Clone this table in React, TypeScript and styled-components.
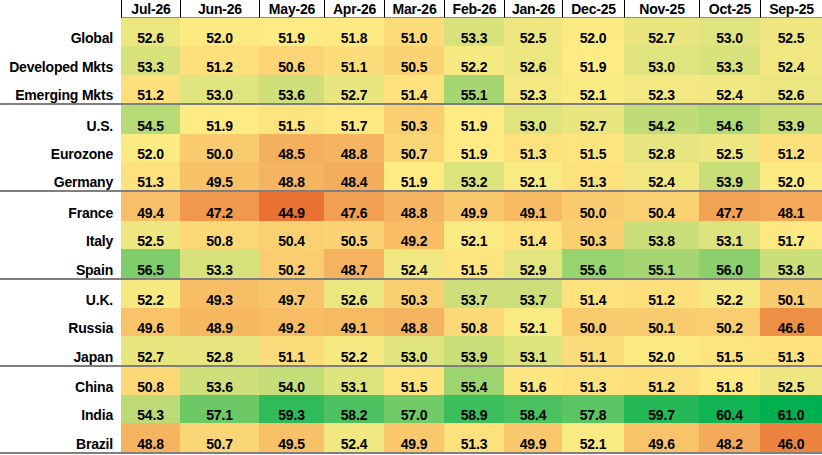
import React from 'react';
import styled, { createGlobalStyle } from 'styled-components';

const MONTHS = ['Jul-26', 'Jun-26', 'May-26', 'Apr-26', 'Mar-26', 'Feb-26', 'Jan-26', 'Dec-25', 'Nov-25', 'Oct-25', 'Sep-25'];
const WIDTHS = [59, 79, 65, 60, 60, 60, 58, 62, 75, 61, 62];
const TEMPLATE = `121px ${WIDTHS.map((w) => `${w}px`).join(' ')}`;

type RowData = { name: string; values: number[] };

const GROUPS: RowData[][] = [
  [
    { name: 'Global', values: [52.6, 52.0, 51.9, 51.8, 51.0, 53.3, 52.5, 52.0, 52.7, 53.0, 52.5] },
    { name: 'Developed Mkts', values: [53.3, 51.2, 50.6, 51.1, 50.5, 52.2, 52.6, 51.9, 53.0, 53.3, 52.4] },
    { name: 'Emerging Mkts', values: [51.2, 53.0, 53.6, 52.7, 51.4, 55.1, 52.3, 52.1, 52.3, 52.4, 52.6] },
  ],
  [
    { name: 'U.S.', values: [54.5, 51.9, 51.5, 51.7, 50.3, 51.9, 53.0, 52.7, 54.2, 54.6, 53.9] },
    { name: 'Eurozone', values: [52.0, 50.0, 48.5, 48.8, 50.7, 51.9, 51.3, 51.5, 52.8, 52.5, 51.2] },
    { name: 'Germany', values: [51.3, 49.5, 48.8, 48.4, 51.9, 53.2, 52.1, 51.3, 52.4, 53.9, 52.0] },
  ],
  [
    { name: 'France', values: [49.4, 47.2, 44.9, 47.6, 48.8, 49.9, 49.1, 50.0, 50.4, 47.7, 48.1] },
    { name: 'Italy', values: [52.5, 50.8, 50.4, 50.5, 49.2, 52.1, 51.4, 50.3, 53.8, 53.1, 51.7] },
    { name: 'Spain', values: [56.5, 53.3, 50.2, 48.7, 52.4, 51.5, 52.9, 55.6, 55.1, 56.0, 53.8] },
  ],
  [
    { name: 'U.K.', values: [52.2, 49.3, 49.7, 52.6, 50.3, 53.7, 53.7, 51.4, 51.2, 52.2, 50.1] },
    { name: 'Russia', values: [49.6, 48.9, 49.2, 49.1, 48.8, 50.8, 52.1, 50.0, 50.1, 50.2, 46.6] },
    { name: 'Japan', values: [52.7, 52.8, 51.1, 52.2, 53.0, 53.9, 53.1, 51.1, 52.0, 51.5, 51.3] },
  ],
  [
    { name: 'China', values: [50.8, 53.6, 54.0, 53.1, 51.5, 55.4, 51.6, 51.3, 51.2, 51.8, 52.5] },
    { name: 'India', values: [54.3, 57.1, 59.3, 58.2, 57.0, 58.9, 58.4, 57.8, 59.7, 60.4, 61.0] },
    { name: 'Brazil', values: [48.8, 50.7, 49.5, 52.4, 49.9, 51.3, 49.9, 52.1, 49.6, 48.2, 46.0] },
  ],
];

const MIN = 44.9;
const MID = 51.9;
const MAX = 61.0;
const LOW = [233, 113, 50];
const CENTER = [255, 235, 132];
const HIGH = [0, 176, 80];

function mix(a: number[], b: number[], t: number): string {
  const c = a.map((v, i) => Math.round(v + (b[i] - v) * t));
  return `rgb(${c[0]}, ${c[1]}, ${c[2]})`;
}

function scale(v: number): string {
  if (v <= MID) return mix(LOW, CENTER, Math.max(0, (v - MIN) / (MID - MIN)));
  return mix(CENTER, HIGH, Math.min(1, (v - MID) / (MAX - MID)));
}

const GlobalStyle = createGlobalStyle`
  html, body {
    margin: 0;
    padding: 0;
    background: #ffffff;
  }
  body {
    font-family: "Liberation Sans", Arial, sans-serif;
  }
`;

const Sheet = styled.div`
  width: 822px;
  height: 455px;
  overflow: hidden;
  font-size: 14px;
  letter-spacing: -0.2px;
  font-weight: 700;
  color: #000000;
`;

const GridRow = styled.div`
  display: grid;
  grid-template-columns: ${TEMPLATE};
`;

const HeaderRow = styled(GridRow)`
  height: 18px;
`;

const Corner = styled.div``;

const MonthHead = styled.div`
  border-left: 1px solid #000000;
  border-bottom: 1px solid #8c8c8c;
  display: flex;
  align-items: center;
  justify-content: center;
  padding-top: 1px;
  line-height: 14px;
  white-space: nowrap;
`;

const Group = styled.div`
  border-bottom: 2px solid #7f7f7f;
`;

const DataRow = styled(GridRow)`
  height: 28.4px;
`;

const Label = styled.div`
  display: flex;
  align-items: flex-end;
  justify-content: flex-end;
  padding: 0 8px 1px 0;
  line-height: 14px;
  white-space: nowrap;
`;

const Cell = styled.div<{ $bg: string }>`
  background: ${(p) => p.$bg};
  display: flex;
  align-items: flex-end;
  justify-content: center;
  padding-bottom: 1px;
  line-height: 14px;
`;

export default function App() {
  return (
    <>
      <GlobalStyle />
      <Sheet>
        <HeaderRow>
          <Corner />
          {MONTHS.map((m) => (
            <MonthHead key={m}>{m}</MonthHead>
          ))}
        </HeaderRow>
        {GROUPS.map((group, gi) => (
          <Group key={gi}>
            {group.map((row) => (
              <DataRow key={row.name}>
                <Label>{row.name}</Label>
                {row.values.map((v, i) => (
                  <Cell key={i} $bg={scale(v)}>
                    {v.toFixed(1)}
                  </Cell>
                ))}
              </DataRow>
            ))}
          </Group>
        ))}
      </Sheet>
    </>
  );
}
